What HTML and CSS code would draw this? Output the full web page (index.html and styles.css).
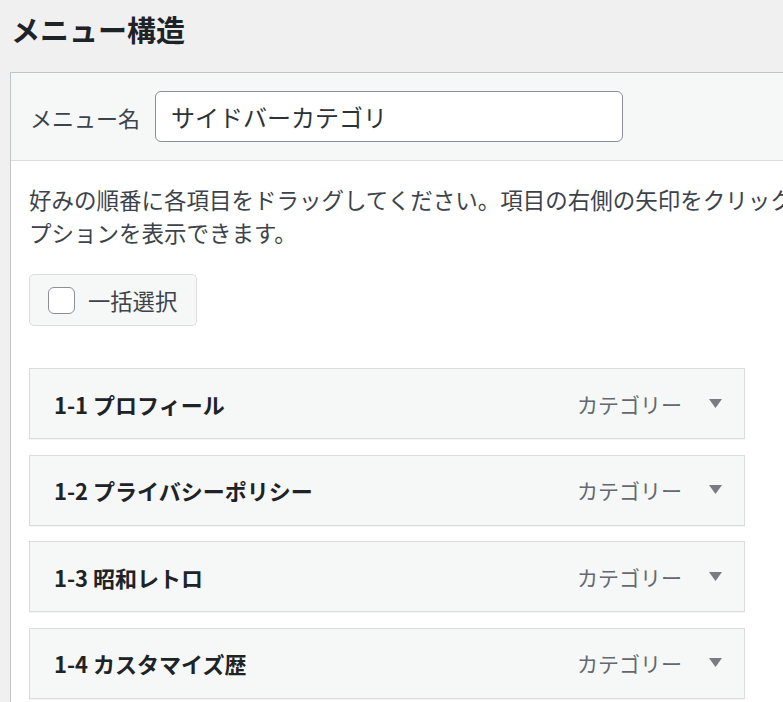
FILE: index.html
```html
<!DOCTYPE html>
<html lang="ja">
<head>
<meta charset="utf-8">
<title>メニュー構造</title>
<link rel="stylesheet" href="styles.css">
</head>
<body>
<h2 class="title">メニュー構造</h2>
<div class="panel">
  <div class="panel-header">
    <label class="name-label" for="menu-name">メニュー名</label>
    <input class="name-input" id="menu-name" type="text" value="サイドバーカテゴリ">
  </div>
  <div class="panel-body">
    <p class="desc">好みの順番に各項目をドラッグしてください。項目の右側の矢印をクリックすると、追加の設定オ<br>プションを表示できます。</p>
    <label class="bulk-btn"><span class="check"></span><span>一括選択</span></label>
    <ul class="items">
      <li class="item"><span class="item-title">1-1 プロフィール</span><span class="item-type">カテゴリー</span><svg class="arrow" width="13" height="9" viewBox="0 0 13 9"><polygon points="0,0 13,0 6.5,9"/></svg></li>
      <li class="item"><span class="item-title">1-2 プライバシーポリシー</span><span class="item-type">カテゴリー</span><svg class="arrow" width="13" height="9" viewBox="0 0 13 9"><polygon points="0,0 13,0 6.5,9"/></svg></li>
      <li class="item"><span class="item-title">1-3 昭和レトロ</span><span class="item-type">カテゴリー</span><svg class="arrow" width="13" height="9" viewBox="0 0 13 9"><polygon points="0,0 13,0 6.5,9"/></svg></li>
      <li class="item"><span class="item-title">1-4 カスタマイズ歴</span><span class="item-type">カテゴリー</span><svg class="arrow" width="13" height="9" viewBox="0 0 13 9"><polygon points="0,0 13,0 6.5,9"/></svg></li>
    </ul>
  </div>
</div>
</body>
</html>
```
FILE: styles.css
```css
html, body {
  margin: 0;
  padding: 0;
  overflow: hidden;
}
body {
  background: #f0f0f1;
  font-family: "Noto Sans CJK JP", "Noto Sans", sans-serif;
  color: #3c434a;
  padding: 10px 0 0 10px;
  width: 1200px;
}
.title {
  margin: 0 0 24px 1px;
  font-size: 29px;
  line-height: 38px;
  font-weight: 700;
  color: #1d2327;
}
.panel {
  width: 1000px;
  border: 1px solid #c3c4c7;
  background: #fff;
}
.panel-header {
  display: flex;
  align-items: center;
  gap: 15px;
  padding: 18px 20px 18px 19px;
  background: #f6f7f7;
  border-bottom: 1px solid #dcdcde;
}
.name-label {
  font-size: 22px;
  line-height: 30px;
  color: #3c434a;
}
.name-input {
  box-sizing: border-box;
  width: 468px;
  height: 51px;
  margin: 0;
  padding: 0 15px;
  border: 1px solid #8c8f94;
  border-radius: 6px;
  background: #fff;
  font-family: inherit;
  font-size: 24px;
  color: #2c3338;
}
.panel-body {
  padding: 22px 18px 40px 18px;
}
.desc {
  margin: 0 0 25px 0;
  font-size: 22.5px;
  line-height: 33px;
  white-space: nowrap;
}
.bulk-btn {
  box-sizing: border-box;
  display: inline-flex;
  align-items: center;
  gap: 13px;
  height: 52px;
  padding: 0 19px 0 18px;
  background: #f6f7f7;
  border: 1px solid #dcdcde;
  border-radius: 5px;
  font-size: 22.3px;
  color: #3c434a;
}
.check {
  box-sizing: border-box;
  width: 27px;
  height: 27px;
  border: 1px solid #8c8f94;
  border-radius: 6px;
  background: #fff;
}
.items {
  list-style: none;
  margin: 42px 0 0 0;
  padding: 0;
  display: flex;
  flex-direction: column;
  gap: 15.67px;
}
.item {
  box-sizing: border-box;
  width: 716px;
  height: 71px;
  display: flex;
  align-items: center;
  padding: 0 22px 0 24px;
  background: #f6f7f7;
  border: 1px solid #dcdcde;
  box-shadow: 0 1px 1px rgba(0, 0, 0, 0.04);
}
.item-title {
  flex: 1;
  font-size: 22px;
  font-weight: 700;
  color: #1d2327;
}
.item-type {
  font-size: 21px;
  color: #646970;
  margin-right: 27px;
}
.arrow {
  fill: #787c82;
  margin-top: -1px;
}
```
